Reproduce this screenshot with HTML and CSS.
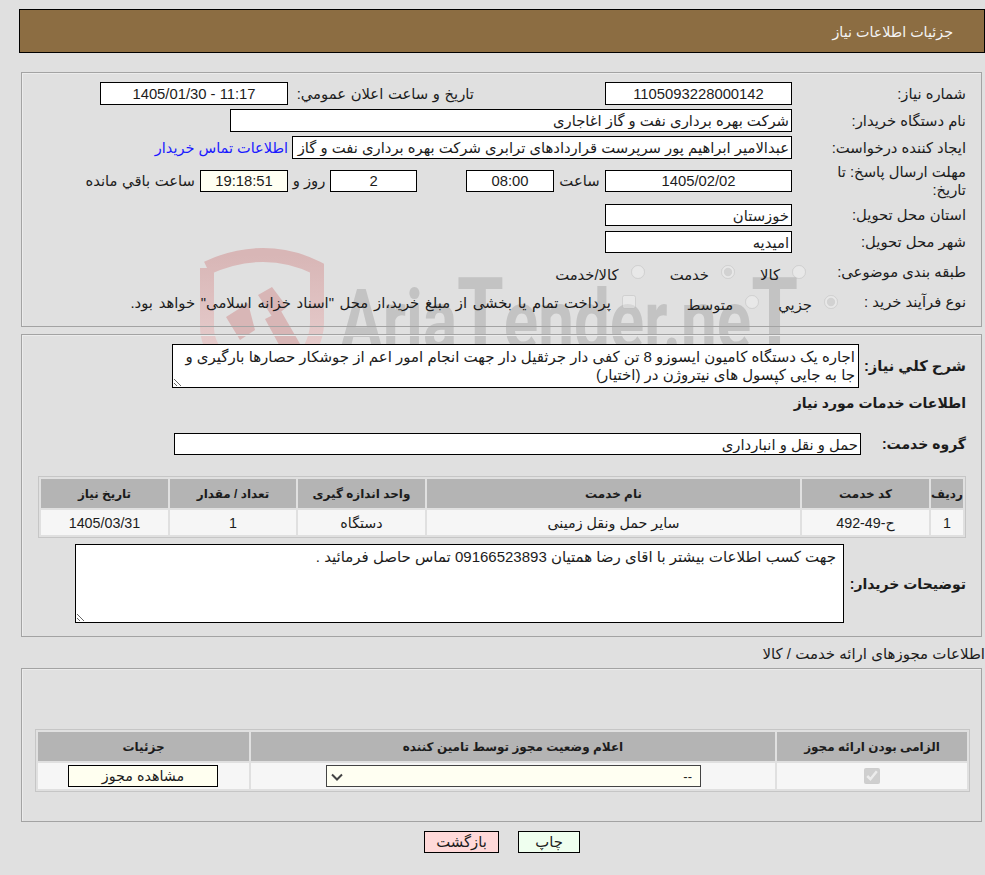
FILE: index.html
```html
<!DOCTYPE html>
<html lang="fa" dir="rtl">
<head>
<meta charset="utf-8">
<title>جزئیات اطلاعات نیاز</title>
<link rel="stylesheet" href="styles.css">
</head>
<body>
<div class="watermark" aria-hidden="true">
  <svg width="620" height="150" viewBox="0 0 620 150">
    <defs>
      <linearGradient id="wm" x1="0" y1="0" x2="0" y2="1">
        <stop offset="0" stop-color="#d8b6b6"/>
        <stop offset="1" stop-color="#ead2d2"/>
      </linearGradient>
    </defs>
    <path d="M14 25 Q42 12 70 12 Q98 12 124 25 V80 Q124 105 97 132 L75 110 M14 25 V85 Q14 110 48 134" fill="none" stroke="url(#wm)" stroke-width="14"/>
    <path d="M44 124 L66 120 L62 146 Z" fill="url(#wm)"/>
    <path d="M33 74 L55 60 L62 87 L47 97 Z M65 52 L79 44 L94 64 L80 75 Z M72 76 L88 68 L110 106 L97 122 Z" fill="#d8b6b6"/>
    <text class="wm-text" x="147" y="107" textLength="458" lengthAdjust="spacingAndGlyphs">Aria<tspan class="wm-big">T</tspan>ender.ne<tspan class="wm-big">T</tspan></text>
  </svg>
</div>

<main class="page">
  <header class="title-bar">جزئیات اطلاعات نیاز</header>

  <section class="panel panel-info">
    <div class="row">
      <label class="lbl">شماره نیاز:</label>
      <input class="field w187 center" dir="ltr" readonly value="1105093228000142">
      <span class="txt ml-announce">تاریخ و ساعت اعلان عمومي:</span>
      <input class="field w188 center" dir="ltr" readonly value="1405/01/30 - 11:17">
    </div>
    <div class="row">
      <label class="lbl">نام دستگاه خریدار:</label>
      <input class="field w562" readonly value="شرکت بهره برداری نفت و گاز اغاجاری">
    </div>
    <div class="row row-last-tight">
      <label class="lbl">ایجاد کننده درخواست:</label>
      <input class="field w500" readonly value="عبدالامیر ابراهیم پور سرپرست قراردادهای ترابری شرکت بهره برداری نفت و گاز اغاجاری">
      <a class="contact" href="#">اطلاعات تماس خریدار</a>
    </div>
    <div class="row row-deadline">
      <label class="lbl lbl-wrap">مهلت ارسال پاسخ: تا تاریخ:</label>
      <input class="field w187 h22 center" dir="ltr" readonly value="1405/02/02">
      <span class="txt m-hour">ساعت</span>
      <input class="field w88 h22 center" dir="ltr" readonly value="08:00">
      <input class="field w87 h22 center m-days" dir="ltr" readonly value="2">
      <span class="txt m-rooz">روز و</span>
      <input class="field w88 h22 center cream" dir="ltr" readonly value="19:18:51">
      <span class="txt m-rem">ساعت باقي مانده</span>
    </div>
    <div class="row row-gap5">
      <label class="lbl">استان محل تحویل:</label>
      <input class="field w187 h22" readonly value="خوزستان">
    </div>
    <div class="row row-gap8">
      <label class="lbl">شهر محل تحویل:</label>
      <input class="field w187 h22" readonly value="امیدیه">
    </div>
    <div class="row row-choice row-cat">
      <label class="lbl">طبقه بندی موضوعی:</label>
      <input class="radio r-kala" type="radio" disabled>
      <span class="txt w-kala">کالا</span>
      <input class="radio r-khed" type="radio" disabled checked>
      <span class="txt w-khed">خدمت</span>
      <input class="radio r-both" type="radio" disabled>
      <span class="txt w-both">کالا/خدمت</span>
    </div>
    <div class="row row-choice">
      <label class="lbl lbl-process">نوع فرآیند خرید :</label>
      <input class="radio r-jozi" type="radio" disabled checked>
      <span class="txt w-jozi">جزیي</span>
      <input class="radio r-mot" type="radio" disabled>
      <span class="txt w-mot">متوسط</span>
      <input class="check r-pay" type="checkbox" disabled>
      <span class="txt w-pay">پرداخت تمام یا بخشی از مبلغ خرید،از محل "اسناد خزانه اسلامی" خواهد بود.</span>
    </div>
  </section>

  <section class="panel panel-need">
    <div class="row row-desc">
      <label class="lbl-bold lbl-desc">شرح کلي نیاز:</label>
      <textarea class="area area-desc" readonly>اجاره یک دستگاه کامیون ایسوزو 8 تن کفی دار جرثقیل دار جهت انجام امور اعم از جوشکار حصارها بارگیری و
جا به جایی کپسول های نیتروژن در (اختیار)</textarea>
    </div>
    <h2 class="need-title">اطلاعات خدمات مورد نیاز</h2>
    <div class="row row-group">
      <label class="lbl-bold lbl-group">گروه خدمت:</label>
      <input class="field w687 h22" readonly value="حمل و نقل و انبارداری">
    </div>
    <table class="grid grid-service">
      <colgroup>
        <col class="c32"><col class="c127"><col class="c373"><col class="c127"><col class="c126"><col class="c127">
      </colgroup>
      <thead>
        <tr><th>ردیف</th><th>کد خدمت</th><th>نام خدمت</th><th>واحد اندازه گیری</th><th>تعداد / مقدار</th><th>تاریخ نیاز</th></tr>
      </thead>
      <tbody>
        <tr><td>1</td><td>ح-49-492</td><td>سایر حمل ونقل زمینی</td><td>دستگاه</td><td>1</td><td>1405/03/31</td></tr>
      </tbody>
    </table>
    <div class="row row-notes">
      <label class="lbl-bold lbl-notes">توضیحات خریدار:</label>
      <textarea class="area area-notes" readonly>جهت کسب اطلاعات بیشتر با اقای رضا همتیان 09166523893 تماس حاصل فرمائید .</textarea>
    </div>
  </section>

  <h3 class="lic-title">اطلاعات مجوزهای ارائه خدمت / کالا</h3>
  <section class="panel panel-lic">
    <table class="grid grid-lic">
      <colgroup><col class="c190"><col class="c524"><col class="c211"></colgroup>
      <thead>
        <tr><th>الزامی بودن ارائه مجوز</th><th>اعلام وضعیت مجوز توسط تامین کننده</th><th>جزئیات</th></tr>
      </thead>
      <tbody>
        <tr>
          <td><input class="lic-check" type="checkbox" checked disabled></td>
          <td><select class="lic-select"><option>--</option></select></td>
          <td><button class="btn btn-view" type="button">مشاهده مجوز</button></td>
        </tr>
      </tbody>
    </table>
  </section>

  <div class="actions">
    <button class="btn btn-print" type="button">چاپ</button>
    <button class="btn btn-back" type="button">بازگشت</button>
  </div>
</main>
</body>
</html>
```
FILE: styles.css
```css
* { box-sizing: border-box; }
html, body { margin: 0; padding: 0; height: 875px; overflow: hidden; }
body {
  position: relative;
  background: #e0e0e0;
  color: #1c1c1c;
  font: 14.8px/18px "Liberation Sans", "DejaVu Sans", sans-serif;
}
.watermark { position: absolute; left: 193px; top: 243px; z-index: 0; direction: ltr; }
.watermark svg { display: block; }
.wm-text { font: 700 86px "Roboto", "Liberation Sans", sans-serif; fill: #c3c3c3; }
.wm-big { font-size: 102px; }

.page { position: relative; z-index: 1; padding-top: 9px; }
.title-bar {
  margin-left: 19px;
  height: 44px;
  padding: 13px 31px 0 0;
  background: #8c6d42;
  border: 1px solid #000;
  color: #f4f4f4;
  font-size: 14.3px;
}
.panel {
  margin: 0 3px 0 21px;
  border: 1px solid #a3a3a3;
  box-shadow: inset 1px 1px 0 #ececec;
}
.panel-info { margin-top: 19px; height: 255px; padding: 9px 15px 0 0; }
.panel-need { margin-top: 7px; height: 303px; padding: 9px 15px 0 0; }
.panel-lic { height: 154px; padding: 60px 11px 0 0; }

.row { display: flex; align-items: center; margin-bottom: 4px; }
.row-last-tight { margin-bottom: 3px; }
.row-deadline { height: 37px; margin-bottom: 5px; }
.row-gap5 { margin-bottom: 5px; }
.row-gap8 { margin-bottom: 8px; }
.row-choice { height: 22px; margin-bottom: 8px; }
.lbl { width: 174px; flex: none; padding-left: 30px; white-space: nowrap; }
.lbl-wrap { white-space: normal; line-height: 18px; }
.txt { white-space: nowrap; }
.field {
  height: 23px;
  padding: 0 2px;
  border: 1px solid #000;
  background: #fff;
  color: #1c1c1c;
  font: inherit;
  border-radius: 0;
  outline: none;
  flex: none;
}
.h22 { height: 22px; }
.center { text-align: center; }
.cream { background: #fffff2; }
.w187 { width: 187px; }
.w188 { width: 188px; }
.w562 { width: 562px; }
.w500 { width: 500px; }
.w88 { width: 88px; }
.w87 { width: 87px; }
.w687 { width: 687px; }
.ml-announce { width: 181px; margin: 0 131px 0 5px; word-spacing: 0.5px; }
.contact { margin-right: 4px; color: #1a1aff; font-size: 14.5px; text-decoration: none; white-space: nowrap; }
.m-hour { width: 41px; margin: 0 5px; text-align: center; }
.m-days { margin-right: 49px; }
.m-rooz { width: 42px; text-align: center; }
.m-rem { margin-right: 5px; word-spacing: 0.5px; }
.radio, .check { margin: 0; flex: none; width: 14px; height: 14px; opacity: .6; }
.row-choice .txt { padding-top: 6px; }
.row-cat .radio { margin-bottom: 1px; }
.r-kala { margin-right: -14px; }
.w-kala { margin-right: 12px; }
.r-khed { margin-right: 25px; }
.w-khed { margin-right: 12px; }
.r-both { margin-right: 25px; }
.w-both { margin-right: 12px; }
.r-jozi { margin-right: -46px; }
.w-jozi { margin-right: 12px; }
.r-mot { margin-right: 19px; }
.w-mot { margin-right: 12px; }
.r-pay { margin-right: 51px; }
.row-choice .w-pay { margin-right: 11px; word-spacing: 1.6px; padding-top: 2px; }

.lbl-bold { font-weight: 700; font-size: 14px; white-space: nowrap; }
.lbl-desc { width: 107px; flex: none; font-size: 14.7px; }
.row-desc { margin-bottom: 6px; }
.area {
  display: block;
  border: 1px solid #000;
  border-radius: 0;
  background: #fff;
  color: #1c1c1c;
  font: inherit;
  line-height: 18px;
  padding: 3px 3px 0 3px;
  outline: none;
  overflow: hidden;
  flex: none;
}
.area-desc { width: 687px; height: 44px; font-size: 15px; }
.need-title { margin: 0; font-size: 14px; line-height: 18px; font-weight: 700; }
.row-group { margin: 21px 0 21px; }
.lbl-group { width: 105px; flex: none; }
.grid {
  border-collapse: separate;
  border-spacing: 2px;
  border: 1px solid #c6c6c6;
  table-layout: fixed;
  font-size: 14.3px;
}
.grid-service { width: 928px; }
.grid-lic { width: 935px; }
.grid th { background: #b4b4b4; font-size: 12px; font-weight: 700; height: 29px; padding: 0; }
.grid td { background: #f6f6f6; text-align: center; height: 25px; padding: 0; }
.grid-lic td { height: 26px; }
.c32 { width: 32px; } .c373 { width: 373px; }
.c127 { width: 127px; } .c126 { width: 126px; }
.c190 { width: 190px; } .c524 { width: 524px; } .c211 { width: 211px; }
.row-notes { margin-top: 6px; }
.lbl-notes { width: 122px; flex: none; }
.area-notes { width: 769px; height: 79px; padding-right: 7px; font-size: 15px; }

.lic-title {
  margin: 8px 0 5px;
  font-size: 15px;
  line-height: 18px;
  font-weight: 400;
  white-space: nowrap;
}
.lic-check { margin: 0; width: 16px; height: 16px; display: block; margin-inline: auto; }
.lic-select {
  display: block;
  width: 375px;
  height: 22px;
  margin: 0 74px 0 0;
  padding: 0 8px 0 24px;
  appearance: none;
  background: #fffff2 url("data:image/svg+xml,%3Csvg xmlns='http://www.w3.org/2000/svg' width='12' height='8'%3E%3Cpath d='M1 1.5l5 5 5-5' fill='none' stroke='%23444' stroke-width='2'/%3E%3C/svg%3E") no-repeat 4px 7px;
  border: 1px solid #444;
  border-radius: 0;
  font: 13px "Liberation Sans", sans-serif;
  color: #1c1c1c;
}
.btn {
  height: 22px;
  padding: 0;
  border: 1px solid #000;
  border-radius: 0;
  color: #1c1c1c;
  font: inherit;
}
.btn-view { display: block; width: 150px; margin: 0 31px 0 0; background: #fffff0; }
.actions { display: flex; gap: 19px; margin: 9px 405px 0 0; }
.btn-print { width: 62px; background: #efffef; }
.btn-back { width: 75px; background: #ffd9d9; }
```
